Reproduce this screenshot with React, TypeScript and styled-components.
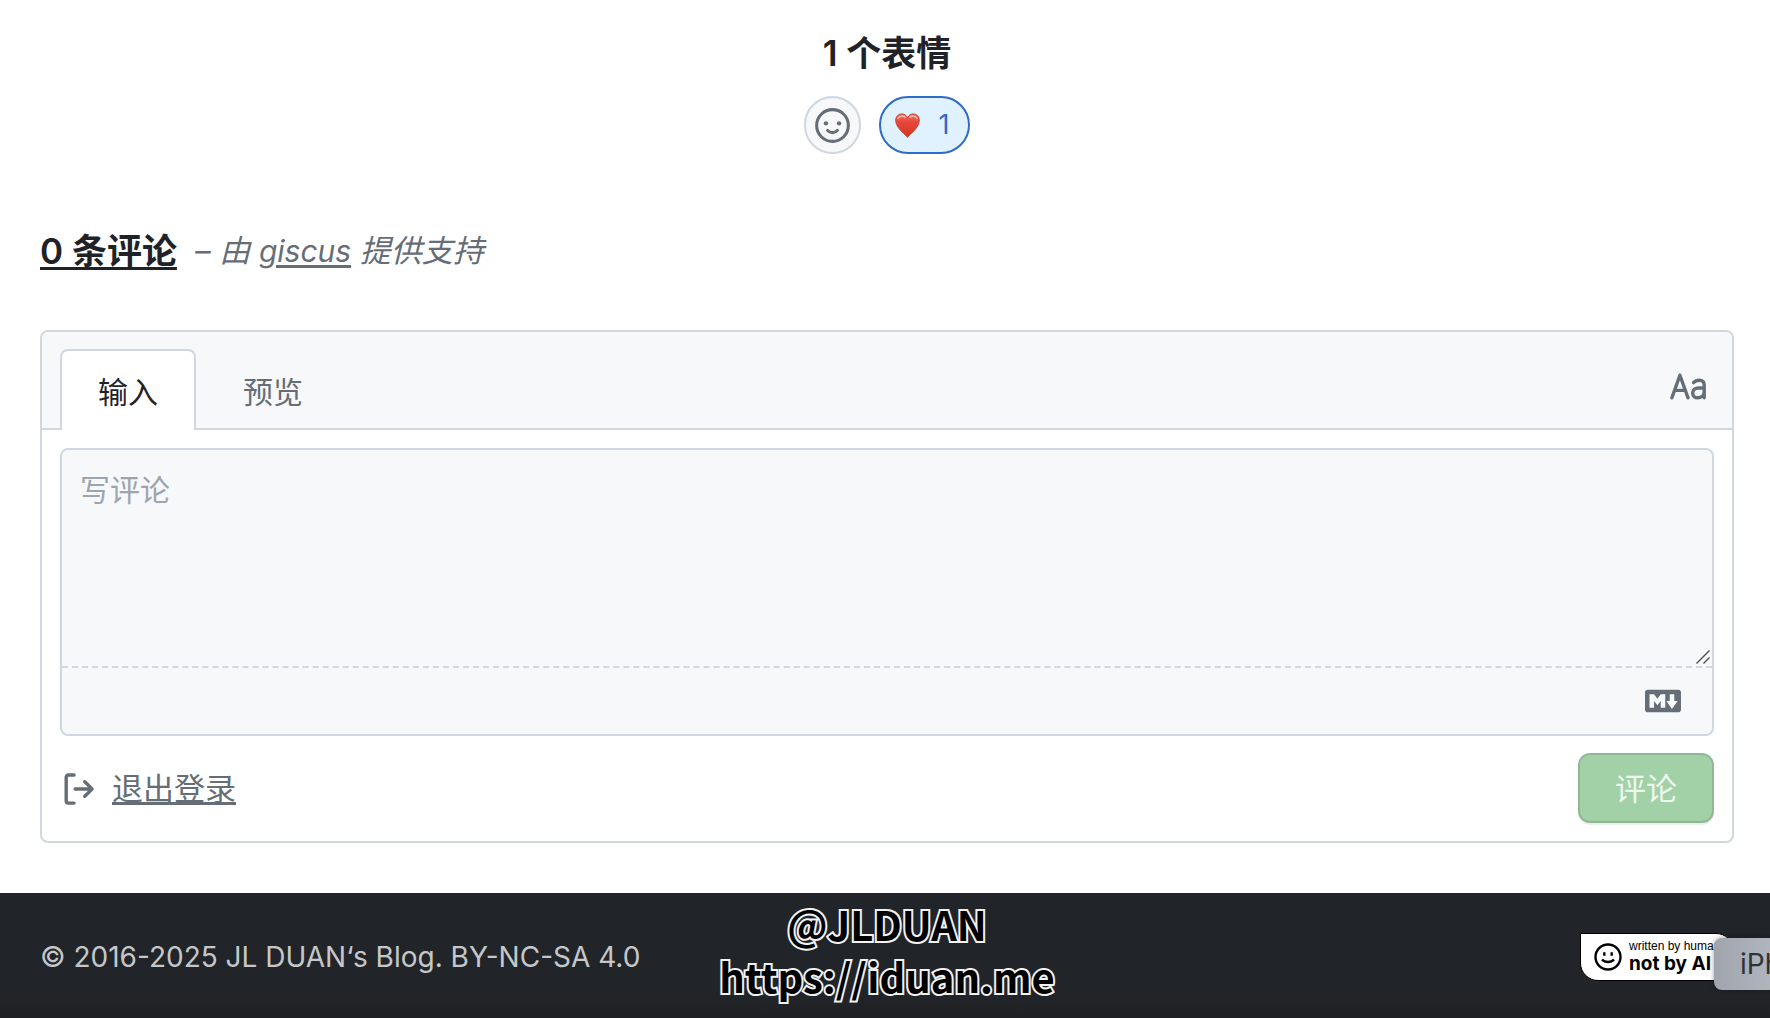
import React from "react";
import styled, { createGlobalStyle, css } from "styled-components";

const color = {
  text: "#1f2328",
  muted: "#656d76",
  border: "#d0d7de",
  subtle: "#f6f8fa",
  accent: "#2f6bc8",
  accentBg: "#e0f2ff",
  footer: "#212529",
};

const GlobalStyle = createGlobalStyle`
  * { box-sizing: border-box; }
  body {
    margin: 0;
    background: #fff;
    color: ${color.text};
    font-family: Inter, "Noto Sans CJK SC", sans-serif;
    font-size: 31px;
    line-height: 48px;
  }
  button, textarea { font: inherit; }
`;

const Page = styled.div`
  display: flex;
  flex-direction: column;
  min-height: 100vh;
  overflow: hidden;
`;

const Main = styled.main`
  flex: 1;
  padding: 29px 36px 50px 40px;
`;

const Reactions = styled.section`
  display: flex;
  flex-direction: column;
  align-items: center;
  gap: 19px;
`;

const Title = styled.h2`
  margin: 0;
  font-size: 35px;
  font-weight: 600;
`;

const ReactionRow = styled.div`
  display: flex;
  gap: 18px;
`;

const ReactionButton = styled.button<{ $active?: boolean }>`
  display: flex;
  align-items: center;
  justify-content: center;
  gap: 19px;
  height: 58px;
  min-width: 57px;
  padding: ${(p) => (p.$active ? "0 19px 0 14px" : "0")};
  border: 2px solid ${(p) => (p.$active ? color.accent : color.border)};
  border-radius: 29px;
  background: ${(p) => (p.$active ? color.accentBg : color.subtle)};
  color: ${(p) => (p.$active ? color.accent : color.muted)};
  font-size: 27px;
`;

const CommentsHeader = styled.header`
  display: flex;
  align-items: center;
  gap: 18px;
  margin: 73px 0 55px;
`;

const CountLink = styled.a`
  color: inherit;
  text-decoration-thickness: 3px;
  text-underline-offset: 3px;
  text-decoration-skip-ink: none;
`;

const Powered = styled.em`
  color: ${color.muted};

  a {
    color: inherit;
    font-size: 30px;
    text-decoration-thickness: 3px;
    text-underline-offset: 3px;
  }
`;

const Card = styled.form`
  border: 2px solid ${color.border};
  border-radius: 8px;
`;

const CardHeader = styled.div`
  display: flex;
  align-items: flex-end;
  justify-content: space-between;
  padding: 17px 18px 0;
  border-bottom: 2px solid ${color.border};
  border-radius: 6px 6px 0 0;
  background: ${color.subtle};
`;

const Tabs = styled.div`
  display: flex;
  gap: 9px;
  margin-bottom: -2px;
`;

const Tab = styled.button<{ $selected?: boolean }>`
  height: 81px;
  padding: 2px 36px 0;
  border: 2px solid transparent;
  border-bottom: 0;
  border-radius: 8px 8px 0 0;
  background: transparent;
  color: ${color.muted};
  font-size: 30px;
  ${(p) =>
    p.$selected &&
    css`
      border-color: ${color.border};
      background: #fff;
      color: ${color.text};
    `}
`;

const IconButton = styled.button`
  display: flex;
  align-items: center;
  height: 79px;
  padding: 0 8px 4px 0;
  border: 0;
  background: none;
  color: ${color.muted};
`;

const CardBody = styled.div`
  padding: 18px;
`;

const Editor = styled.div`
  border: 2px solid ${color.border};
  border-radius: 8px;
  background: ${color.subtle};
`;

const InputArea = styled.div`
  position: relative;
  border-bottom: 2px dashed ${color.border};
`;

const TextInput = styled.textarea`
  display: block;
  width: 100%;
  height: 216px;
  padding: 16px 18px;
  border: 0;
  outline: 0;
  resize: none;
  background: transparent;
  color: ${color.text};
  font-size: 30px;

  &::placeholder {
    color: #9ea4ae;
    opacity: 1;
  }
`;

const Grip = styled.svg`
  position: absolute;
  right: 2px;
  bottom: 2px;
`;

const EditorFooter = styled.div`
  display: flex;
  align-items: center;
  justify-content: flex-end;
  height: 66px;
  padding-right: 31px;
  color: ${color.muted};

  a {
    display: flex;
    color: inherit;
  }
`;

const Actions = styled.div`
  display: flex;
  align-items: center;
  justify-content: space-between;
  margin-top: 17px;
`;

const SignOut = styled.a`
  display: flex;
  align-items: center;
  gap: 16px;
  padding-top: 2px;
  color: ${color.muted};
  text-decoration-thickness: 3px;
  text-underline-offset: 2px;
`;

const SubmitButton = styled.button`
  height: 70px;
  padding: 2px 35px 0;
  border: 2px solid #90b896;
  border-radius: 12px;
  background: #a3d1a7;
  box-shadow: 0 2px 0 rgba(31, 35, 40, 0.08);
  color: #edf8ee;
`;

const Footer = styled.footer`
  position: relative;
  display: grid;
  grid-template-columns: 1fr auto 1fr;
  align-items: center;
  height: 125px;
  padding: 3px 36px 0 40px;
  background: linear-gradient(${color.footer} 80%, #1f2023);
  color: #c6c7c8;
  font-size: 28px;
`;

const Watermark = styled.p`
  margin: 0;
  padding-bottom: 15px;
  color: #000;
  font-family: "Noto Sans CJK SC", sans-serif;
  font-size: 40px;
  font-weight: 700;
  line-height: 52px;
  text-align: center;
  -webkit-text-stroke: 4px #f2f2f2;
  paint-order: stroke fill;
`;

const Badge = styled.a`
  display: flex;
  align-items: center;
  justify-self: end;
  gap: 7px;
  width: 154px;
  height: 48px;
  padding-left: 13px;
  border: 1px solid #000;
  border-radius: 0 18px 0 18px;
  background: #fff;
  color: #000;
  text-decoration: none;
  white-space: nowrap;
`;

const BadgeText = styled.span`
  display: flex;
  flex-direction: column;
  font-family: "Liberation Sans", Arial, sans-serif;
  font-size: 12px;
  line-height: 13px;

  strong {
    font-family: Inter, sans-serif;
    font-size: 19px;
    font-weight: 700;
    line-height: 21px;
  }
`;

const DeviceChip = styled.div`
  position: absolute;
  right: 0;
  bottom: 28px;
  width: 56px;
  height: 52px;
  padding-left: 26px;
  overflow: hidden;
  border-radius: 8px 0 0 8px;
  background: linear-gradient(90deg, #9fa4ad, #b0b5bd);
  box-shadow: 0 0 5px rgba(0, 0, 0, 0.4);
  color: #303236;
  font-size: 28px;
  line-height: 52px;
`;

function Heart() {
  return (
    <svg width="25" height="25" viewBox="0 0 25 25" aria-hidden="true">
      <defs>
        <linearGradient id="heart" x1="0" y1="0" x2="0" y2="1">
          <stop offset="0" stopColor="#f0705a" />
          <stop offset="0.35" stopColor="#e5483a" />
          <stop offset="1" stopColor="#d8301f" />
        </linearGradient>
      </defs>
      <path
        d="M12.5 24.5C11 22 1 15.5.6 7.8.4 3.7 3.2.8 6.7.8c2.7 0 4.7 1.5 5.8 3.8C13.6 2.3 15.6.8 18.3.8c3.5 0 6.3 2.9 6.1 7C24 15.5 14 22 12.5 24.5Z"
        fill="url(#heart)"
        stroke="#b5392c"
        strokeWidth="0.7"
      />
      <path
        d="M3 5.5C4 3 8 2.3 10 4.3M15 4.3C17 2.3 21 3 22 5.5"
        fill="none"
        stroke="#fbb5a5"
        strokeWidth="1.5"
        strokeLinecap="round"
      />
    </svg>
  );
}

function SmileyIcon() {
  return (
    <svg width="35" height="35" viewBox="0 0 16 16" fill="none" stroke="currentColor" strokeWidth="1.4" strokeLinecap="round" aria-hidden="true">
      <circle cx="8" cy="8" r="7.25" />
      <circle cx="5" cy="7" r="1" fill="currentColor" stroke="none" />
      <circle cx="11" cy="7" r="1" fill="currentColor" stroke="none" />
      <path d="M5.75 10.25c.5.65 1.25 1 2.25 1s1.75-.35 2.25-1" />
    </svg>
  );
}

function TypographyIcon() {
  return (
    <svg width="36" height="27" viewBox="0 0 36 27" fill="none" stroke="currentColor" strokeWidth="3.4" strokeLinecap="round" strokeLinejoin="round" aria-hidden="true">
      <path d="M1.9 24.8L9.9 2.2L18 24.8M5 17.4H14.8" />
      <path d="M23.5 9.6C25.5 7.4 28 7.2 29.3 7.2C32.5 7.2 34.2 9.2 34.2 12V24.8M34.2 15H28.5C25 15 22.7 17 22.7 19.9C22.7 22.8 24.8 24.8 27.5 24.8C31 24.8 34.2 22.5 34.2 18.5" />
    </svg>
  );
}

function SignOutIcon() {
  return (
    <svg width="36" height="36" viewBox="0 0 16 16" fill="currentColor" aria-hidden="true">
      <path d="M2 2.75C2 1.784 2.784 1 3.75 1h2.5a.75.75 0 0 1 0 1.5h-2.5a.25.25 0 0 0-.25.25v10.5c0 .138.112.25.25.25h2.5a.75.75 0 0 1 0 1.5h-2.5A1.75 1.75 0 0 1 2 13.25Zm10.44 4.5-1.97-1.97a.749.749 0 0 1 .326-1.275.749.749 0 0 1 .734.215l3.25 3.25a.75.75 0 0 1 0 1.06l-3.25 3.25a.749.749 0 0 1-1.275-.326.749.749 0 0 1 .215-.734l1.97-1.97H6.75a.75.75 0 0 1 0-1.5Z" />
    </svg>
  );
}

function MarkdownIcon() {
  return (
    <svg width="36" height="36" viewBox="0 0 16 16" fill="currentColor" aria-hidden="true">
      <path d="M14.85 3H1.15C.52 3 0 3.52 0 4.15v7.69C0 12.48.52 13 1.15 13h13.69c.64 0 1.15-.52 1.15-1.15v-7.7C16 3.52 15.48 3 14.85 3zM9 11H7V8L5.5 9.92 4 8v3H2V5h2l1.5 2L7 5h2v6zm2.99.5L9.5 8H11V5h2v3h1.5l-2.51 3.5z" />
    </svg>
  );
}

function BadgeFace() {
  return (
    <svg width="28" height="28" viewBox="0 0 28 28" fill="none" stroke="#000" strokeWidth="2.4" aria-hidden="true">
      <circle cx="14" cy="14" r="12.5" />
      <path d="M10.3 9.2v3.6M17.7 9.2v3.6" />
      <path d="M8 16.5c3 3.4 9 3.4 12 0" />
    </svg>
  );
}

export default function App() {
  return (
    <>
      <GlobalStyle />
      <Page>
        <Main>
          <Reactions>
            <Title>1 个表情</Title>
            <ReactionRow>
              <ReactionButton type="button" aria-label="添加表情">
                <SmileyIcon />
              </ReactionButton>
              <ReactionButton type="button" $active>
                <Heart />
                <span>1</span>
              </ReactionButton>
            </ReactionRow>
          </Reactions>

          <CommentsHeader>
            <Title>
              <CountLink href="#comments">0 条评论</CountLink>
            </Title>
            <Powered>
              – 由 <a href="#giscus">giscus</a> 提供支持
            </Powered>
          </CommentsHeader>

          <Card id="comments" onSubmit={(e) => e.preventDefault()}>
            <CardHeader>
              <Tabs>
                <Tab type="button" $selected>
                  输入
                </Tab>
                <Tab type="button">预览</Tab>
              </Tabs>
              <IconButton type="button" aria-label="等宽字体">
                <TypographyIcon />
              </IconButton>
            </CardHeader>
            <CardBody>
              <Editor>
                <InputArea>
                  <TextInput aria-label="写评论" placeholder="写评论" />
                  <Grip width="14" height="14" viewBox="0 0 14 14" stroke="#4b4f54" strokeWidth="1.4">
                    <path d="M0.5 13.5L13.5 0.5M7.5 13.5L13.5 7.5" />
                  </Grip>
                </InputArea>
                <EditorFooter>
                  <a href="#markdown" aria-label="Markdown">
                    <MarkdownIcon />
                  </a>
                </EditorFooter>
              </Editor>
              <Actions>
                <SignOut href="#signout">
                  <SignOutIcon />
                  <span>退出登录</span>
                </SignOut>
                <SubmitButton type="submit">评论</SubmitButton>
              </Actions>
            </CardBody>
          </Card>
        </Main>

        <Footer>
          <span>© 2016-2025 JL DUAN‘s Blog. BY-NC-SA 4.0</span>
          <Watermark>
            @JLDUAN
            <br />
            https://iduan.me
          </Watermark>
          <Badge href="#notbyai">
            <BadgeFace />
            <BadgeText>
              written by human
              <strong>not by AI</strong>
            </BadgeText>
          </Badge>
          <DeviceChip>iPh</DeviceChip>
        </Footer>
      </Page>
    </>
  );
}
